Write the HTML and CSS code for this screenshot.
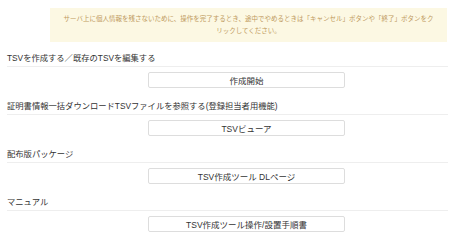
FILE: index.html
```html
<!DOCTYPE html>
<html lang="ja">
<head>
  <meta charset="UTF-8" />
  <meta name="viewport" content="width=device-width, initial-scale=1.0"/>
  <title>TSV作成ツール</title>
  <link rel="stylesheet" href="styles.css">
</head>
<body>
  <div class="page">
    <div class="alert">
      サーバ上に個人情報を残さないために、操作を完了するとき、途中でやめるときは「キャンセル」ボタンや「終了」ボタンをクリックしてください。
    </div>

    <div class="section">
      <h3 class="section-title">TSVを作成する／既存のTSVを編集する</h3>
      <div class="actions">
        <button class="btn">作成開始</button>
      </div>
    </div>

    <div class="section">
      <h3 class="section-title">証明書情報一括ダウンロードTSVファイルを参照する(登録担当者用機能)</h3>
      <div class="actions">
        <button class="btn">TSVビューア</button>
      </div>
    </div>

    <div class="section">
      <h3 class="section-title">配布版パッケージ</h3>
      <div class="actions">
        <button class="btn">TSV作成ツール DLページ</button>
      </div>
    </div>

    <div class="section">
      <h3 class="section-title">マニュアル</h3>
      <div class="actions">
        <button class="btn">TSV作成ツール操作/設置手順書</button>
      </div>
    </div>
  </div>
</body>
</html>
```

FILE: styles.css
```css
* {
  margin: 0; padding: 0; box-sizing: border-box;
}

body {
  font-family: "Liberation Sans", "Noto Sans CJK JP", sans-serif;
  background: #fff;
  color: #333;
}

.page {
  padding: 8px 2px 0 7px;
}

.alert {
  margin-left: 43px;
  margin-right: 1px;
  height: 34px;
  padding: 5px 12px 0;
  background: #fcf8e3;
  color: #c09a5e;
  font-size: 6.5px;
  line-height: 12px;
  text-align: center;
}

.section {
  margin-top: 10px;
}

.section + .section {
  margin-top: 12px;
}

.section-title {
  font-size: 8.3px;
  font-weight: normal;
  line-height: 12px;
  padding-bottom: 2px;
  border-bottom: 1px solid #eee;
}

.actions {
  margin-top: 5px;
  padding-left: 141px;
}

.btn {
  display: block;
  width: 197px;
  height: 16px;
  background: #fff;
  border: 1px solid #ddd;
  border-radius: 2px;
  font-family: inherit;
  font-size: 8.5px;
  color: #333;
  cursor: pointer;
}
```
